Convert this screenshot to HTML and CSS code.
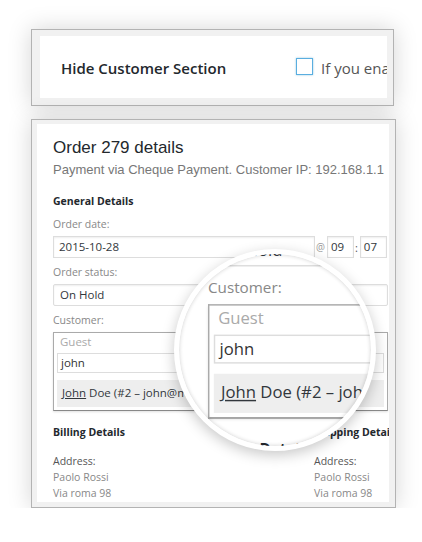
FILE: index.html
```html
<!DOCTYPE html>
<html lang="en">
<head>
<meta charset="utf-8">
<title>Hide Customer Section</title>
<link rel="stylesheet" href="styles.css">
</head>
<body>
<div class="page">
  <section class="panel panel-top">
    <div class="panel-inner setting-row">
      <div class="setting-label">Hide Customer Section</div>
      <div class="setting-field">
        <span class="checkbox"></span>
        <span class="setting-desc">If you enable this option the customer section will be hidden</span>
      </div>
    </div>
  </section>

  <section class="panel panel-order">
    <div class="panel-inner order">
      <h2 class="order-title">Order 279 details</h2>
      <p class="order-meta">Payment via Cheque Payment. Customer IP: 192.168.1.1</p>
      <h3 class="section-title">General Details</h3>
      <div class="form">
        <div class="field field-first">
          <div class="label">Order date:</div>
          <div class="date-row">
            <div class="input date">2015-10-28</div>
            <span class="at">@</span>
            <div class="input time">09</div>
            <span class="colon">:</span>
            <div class="input time">07</div>
          </div>
        </div>
        <div class="field">
          <div class="label">Order status:</div>
          <div class="input select">On Hold</div>
        </div>
        <div class="field">
          <div class="label">Customer:</div>
          <div class="customer-box">
            <div class="guest">Guest</div>
            <div class="search">john</div>
            <div class="result"><u>John</u> Doe (#2 – john@mail.com)</div>
          </div>
        </div>
        <div class="addresses">
          <div class="addr-col">
            <div class="addr-title">Billing Details</div>
            <div class="addr-lines">
              <div class="addr-label">Address:</div>
              <div>Paolo Rossi</div>
              <div>Via roma 98</div>
            </div>
          </div>
          <div class="addr-col">
            <div class="addr-title">Shipping Details</div>
            <div class="addr-lines">
              <div class="addr-label">Address:</div>
              <div>Paolo Rossi</div>
              <div>Via roma 98</div>
            </div>
          </div>
        </div>
      </div>

      <div class="lens" aria-hidden="true">
        <div class="lens-view form">
          <div class="field lens-first">
            <div class="label">Order status:</div>
            <div class="input select">On Hold</div>
          </div>
          <div class="field">
            <div class="label">Customer:</div>
            <div class="customer-box">
              <div class="guest">Guest</div>
              <div class="search">john</div>
              <div class="result"><u>John</u> Doe (#2 – john@mail.com)</div>
            </div>
          </div>
          <div class="addresses">
            <div class="addr-col">
              <div class="addr-title">Billing Details</div>
            </div>
            <div class="addr-col">
              <div class="addr-title">Shipping Details</div>
            </div>
          </div>
        </div>
      </div>
    </div>
  </section>
</div>
</body>
</html>
```

FILE: styles.css
```css
* { box-sizing: border-box; }
html, body { margin: 0; padding: 0; background: #fff; }
body {
  font-family: "Open Sans", "Liberation Sans", sans-serif;
  color: #444;
}
.page {
  padding: 29px 0 0 31px;
  display: flex;
  flex-direction: column;
  align-items: flex-start;
  gap: 13px;
}
.panel {
  border: 1px solid #b3b3b3;
  background: #f1f1f1;
  box-shadow: 0 0 22px rgba(0, 0, 0, 0.17);
}
.panel-top { width: 363px; padding: 6px 6px 7px 8px; }
.panel-order { width: 365px; padding: 4px 6px 5px 5px; }
.panel-inner {
  background: #fff;
  overflow: hidden;
  position: relative;
}

/* setting row */
.setting-row {
  height: 62px;
  padding: 2px 0 0 21px;
  display: flex;
  align-items: center;
}
.setting-label {
  width: 235px;
  flex: none;
  font-size: 15px;
  font-weight: 600;
  line-height: 20px;
  color: #23282d;
}
.setting-field {
  display: flex;
  align-items: center;
  white-space: nowrap;
}
.checkbox {
  flex: none;
  width: 17px;
  height: 17px;
  margin: -3px 8px 0 0;
  border: 1px solid #5aaee0;
  background: #fff;
  box-shadow: 0 0 2px rgba(30, 140, 190, 0.45);
}
.setting-desc {
  font-size: 15px;
  line-height: 20px;
  color: #555;
}

/* order panel */
.order {
  height: 378px;
  padding: 14px 0 0 16px;
}
.order-title {
  margin: 0;
  font-family: "Liberation Sans", Arial, sans-serif;
  font-weight: 400;
  font-size: 17px;
  line-height: 20px;
  color: #23282d;
  white-space: nowrap;
}
.order-meta {
  margin: 4px 0 0;
  font-family: "Liberation Sans", Arial, sans-serif;
  font-size: 13px;
  line-height: 16px;
  color: #777;
  white-space: nowrap;
}
.section-title {
  margin: 16px 0 0;
  font-size: 10.5px;
  line-height: 15px;
  font-weight: 700;
  color: #23282d;
}
.form { width: 335px; }
.field { margin-top: 7px; }
.field-first { margin-top: 8px; }
.label {
  font-size: 10.5px;
  line-height: 14px;
  color: #888;
  margin-bottom: 5px;
}
.input {
  height: 22px;
  border: 1px solid #ddd;
  box-shadow: inset 0 1px 2px rgba(0, 0, 0, 0.07);
  background: #fff;
  font-size: 11.5px;
  line-height: 20px;
  color: #32373c;
  padding: 0 5px;
  white-space: nowrap;
}
.select { padding-left: 6px; border-radius: 2px; }
.date-row { display: flex; align-items: center; }
.input.date { width: 262px; flex: none; }
.at {
  font-size: 10px;
  color: #999;
  margin: 0 2px 0 1px;
}
.colon {
  font-size: 11px;
  color: #555;
  margin: 0 2px 0 1px;
}
.input.time { width: 27px; flex: none; padding: 0 3px; }

.customer-box {
  border: 1px solid #aaa;
  border-bottom-color: #888;
  padding: 0 3px 3px;
  background: #fff;
  box-shadow: 0 1px 2px rgba(0, 0, 0, 0.12);
}
.guest {
  height: 17px;
  line-height: 17px;
  font-size: 11.5px;
  color: #aaa;
  padding-left: 3px;
}
.search {
  margin-top: 3px;
  height: 20px;
  border: 1px solid #ddd;
  font-size: 11.5px;
  line-height: 18px;
  padding: 0 3px;
  color: #333;
}
.result {
  margin-top: 7px;
  height: 27px;
  background: #eee;
  font-size: 11.5px;
  line-height: 25px;
  padding-left: 5px;
  color: #32373c;
  white-space: nowrap;
}
.result u { text-decoration: underline; }

.addresses {
  display: grid;
  grid-template-columns: 261px 1fr;
  margin-top: 14px;
  white-space: nowrap;
}
.addr-title {
  font-size: 10.5px;
  line-height: 15px;
  font-weight: 700;
  color: #23282d;
}
.addr-lines {
  margin-top: 13px;
  font-size: 10.5px;
  line-height: 16px;
  color: #888;
}
.addr-label { color: #555; }

/* magnifier */
.lens {
  position: absolute;
  left: 137px;
  top: 125px;
  width: 202px;
  height: 202px;
  border-radius: 50%;
  border: 5px solid #fff;
  background: #fff;
  overflow: hidden;
  box-shadow: 0 4px 14px rgba(0, 0, 0, 0.22);
}
.lens::after {
  content: "";
  position: absolute;
  inset: 0;
  border-radius: 50%;
  box-shadow: inset 0 0 4px rgba(0, 0, 0, 0.2);
}
.lens-view {
  position: absolute;
  left: 29px;
  top: -47px;
  transform: scale(1.45);
  transform-origin: 0 0;
}
.lens-first { margin-top: 0; }
```
